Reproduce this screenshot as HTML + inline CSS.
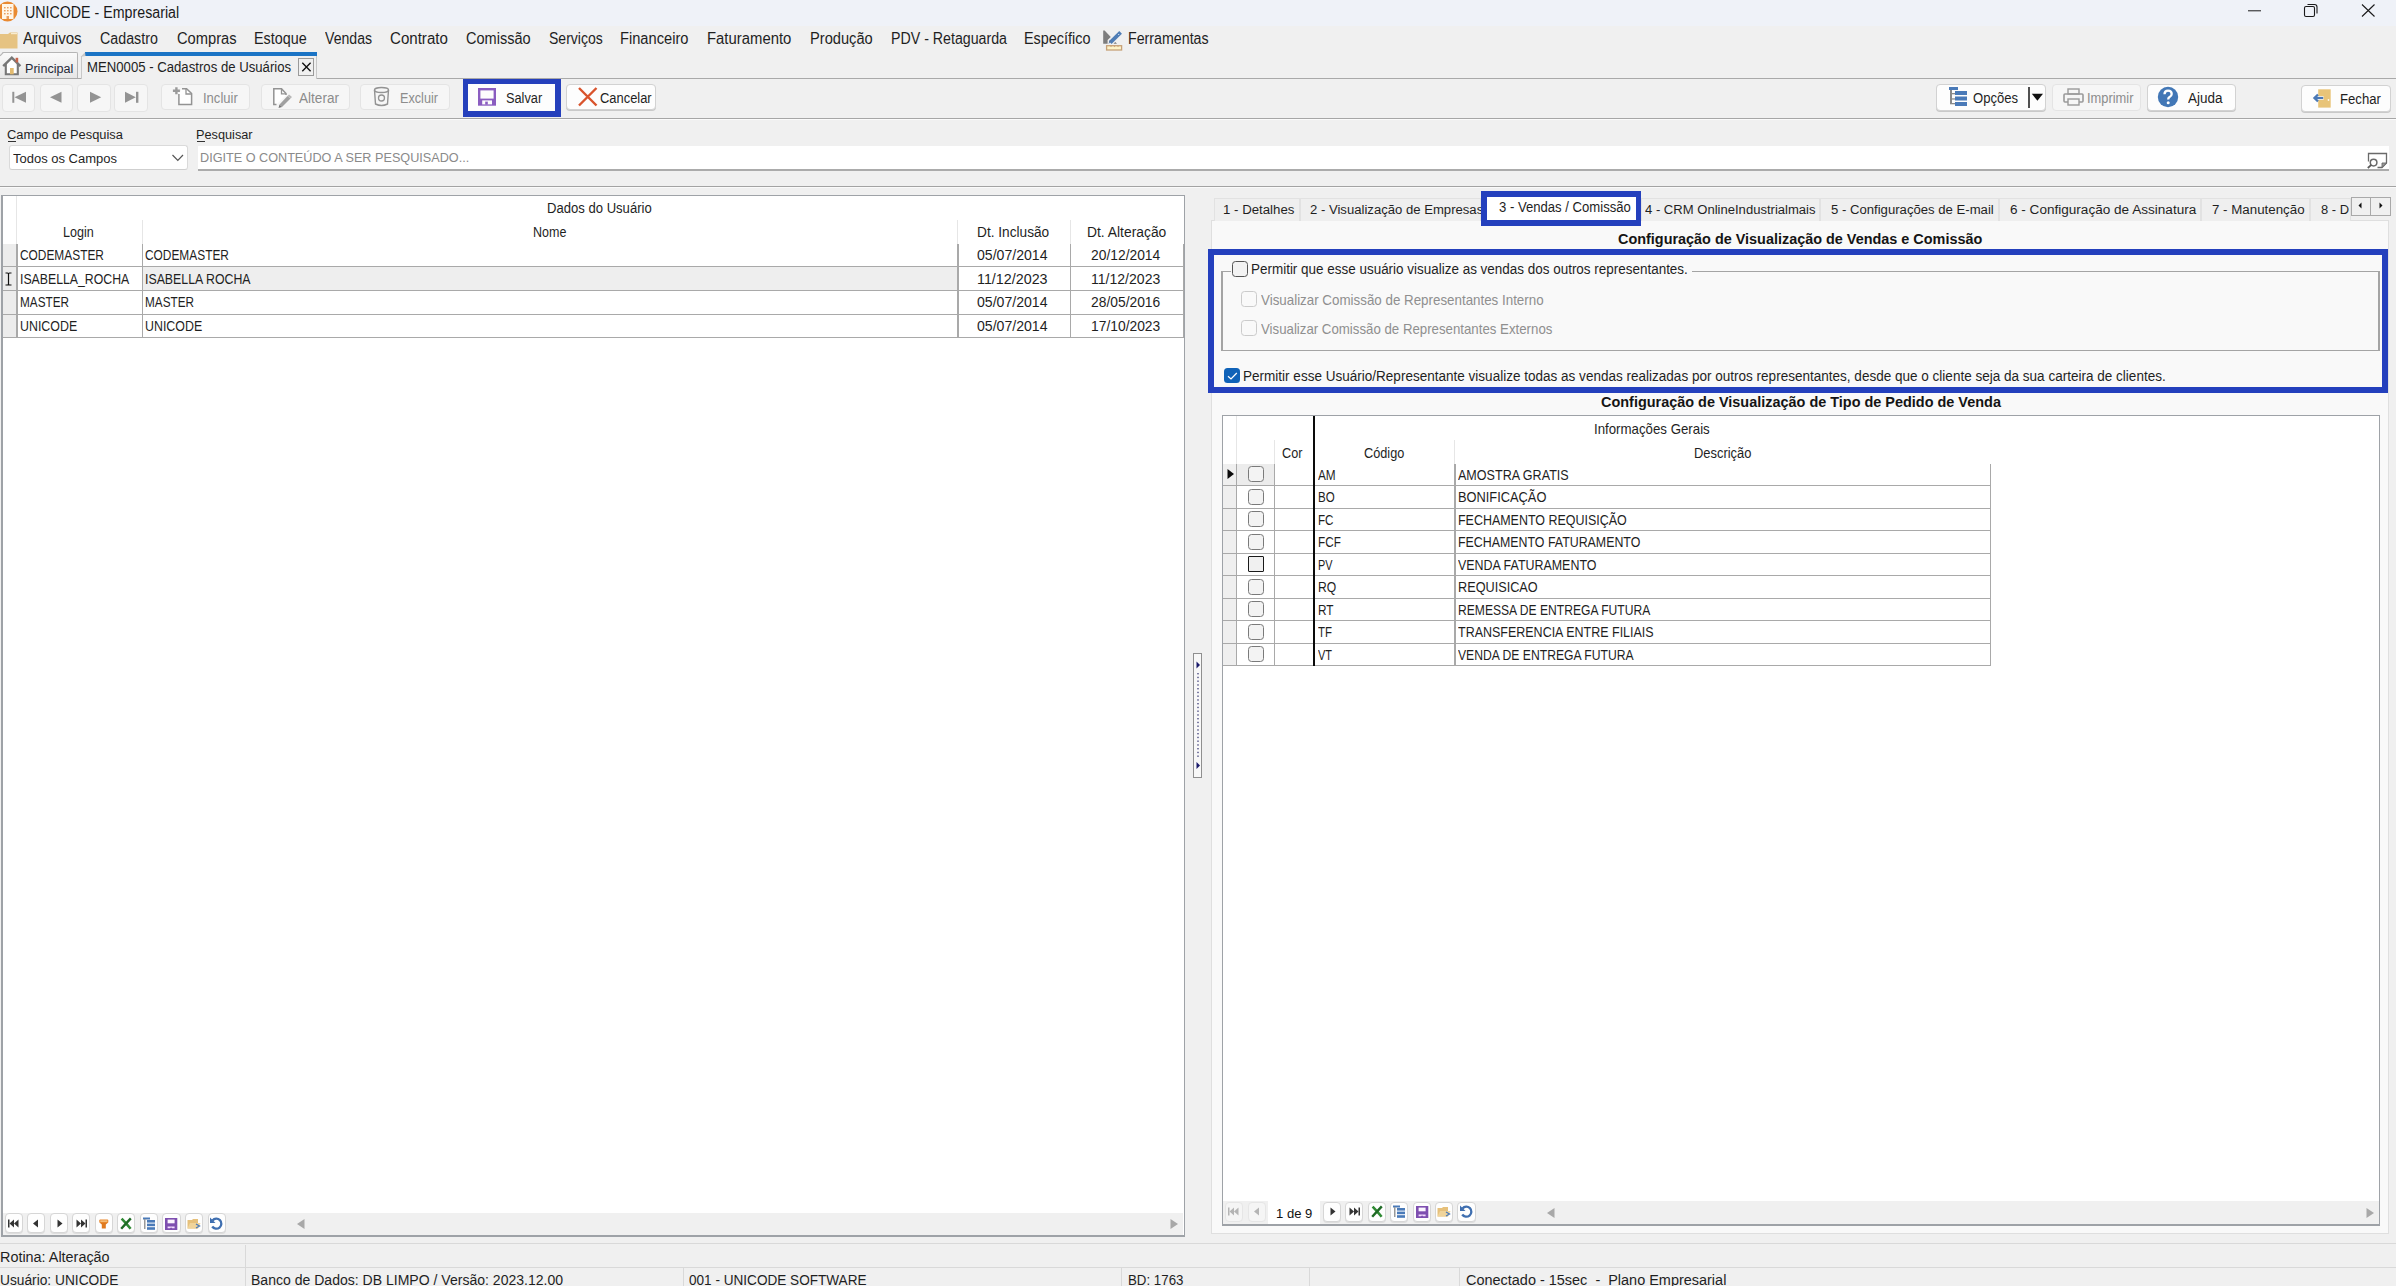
<!DOCTYPE html>
<html><head><meta charset="utf-8"><style>
html,body{margin:0;padding:0;}
body{width:2396px;height:1286px;overflow:hidden;position:relative;background:#f0f0f0;font-family:"Liberation Sans",sans-serif;}
.a{position:absolute;}
.t{position:absolute;white-space:nowrap;transform-origin:0 0;}
</style></head><body>
<div class="a" style="left:0.00px;top:0.00px;width:2396.00px;height:26.00px;background:#eff2f8;"></div>
<svg class="a" style="left:0.00px;top:0.00px;" width="20" height="24" viewBox="0 0 20 24"><circle cx="7.5" cy="11.5" r="10" fill="#e98a32"/><rect x="2" y="4" width="11.5" height="15" fill="#fff6e8"/><g fill="#e9a060"><rect x="4" y="7" width="1.6" height="1.4"/><rect x="7" y="7" width="1.6" height="1.4"/><rect x="10" y="7" width="1.6" height="1.4"/><rect x="4" y="10" width="1.6" height="1.4"/><rect x="7" y="10" width="1.6" height="1.4"/><rect x="10" y="10" width="1.6" height="1.4"/><rect x="4" y="13" width="1.6" height="1.4"/><rect x="7" y="13" width="1.6" height="1.4"/><rect x="10" y="13" width="1.6" height="1.4"/><rect x="6.5" y="16" width="2.5" height="3"/></g></svg>
<div class="t" style="left:25.00px;top:4px;font-size:16.42px;line-height:16.42px;color:#1a1a1a;transform:scaleX(0.8673);">UNICODE - Empresarial</div>
<svg class="a" style="left:2240.00px;top:0.00px;" width="156" height="24" viewBox="0 0 156 24"><line x1="8" y1="10.8" x2="21" y2="10.8" stroke="#1a1a1a" stroke-width="1"/><rect x="64.5" y="6.5" width="10" height="10" rx="1.5" fill="none" stroke="#1a1a1a" stroke-width="1.1"/><path d="M67.5 4.5 H74.5 Q77 4.5 77 7 V13.5" fill="none" stroke="#1a1a1a" stroke-width="1.1"/><path d="M122 4.5 L134.5 16.5 M134.5 4.5 L122 16.5" stroke="#1a1a1a" stroke-width="1.1"/></svg>
<svg class="a" style="left:0.00px;top:32.00px;" width="19" height="18" viewBox="0 0 19 18"><path d="M0 2 H8 L10 0.5 H17.5 V16.5 H0 Z" fill="#e6c382"/><rect x="11" y="1" width="6" height="1.2" fill="#f8ecd0"/></svg>
<div class="t" style="left:22.80px;top:31px;font-size:15.84px;line-height:15.84px;color:#1f1f1f;transform:scaleX(0.9525);">Arquivos</div>
<div class="t" style="left:100.40px;top:31px;font-size:15.84px;line-height:15.84px;color:#1f1f1f;transform:scaleX(0.9008);">Cadastro</div>
<div class="t" style="left:177.00px;top:31px;font-size:15.84px;line-height:15.84px;color:#1f1f1f;transform:scaleX(0.9291);">Compras</div>
<div class="t" style="left:254.30px;top:31px;font-size:15.84px;line-height:15.84px;color:#1f1f1f;transform:scaleX(0.9067);">Estoque</div>
<div class="t" style="left:324.70px;top:31px;font-size:15.84px;line-height:15.84px;color:#1f1f1f;transform:scaleX(0.8912);">Vendas</div>
<div class="t" style="left:390.00px;top:31px;font-size:15.84px;line-height:15.84px;color:#1f1f1f;transform:scaleX(0.9530);">Contrato</div>
<div class="t" style="left:465.70px;top:31px;font-size:15.84px;line-height:15.84px;color:#1f1f1f;transform:scaleX(0.9187);">Comissão</div>
<div class="t" style="left:548.50px;top:31px;font-size:15.84px;line-height:15.84px;color:#1f1f1f;transform:scaleX(0.8858);">Serviços</div>
<div class="t" style="left:620.20px;top:31px;font-size:15.84px;line-height:15.84px;color:#1f1f1f;transform:scaleX(0.9262);">Financeiro</div>
<div class="t" style="left:706.60px;top:31px;font-size:15.84px;line-height:15.84px;color:#1f1f1f;transform:scaleX(0.9398);">Faturamento</div>
<div class="t" style="left:809.60px;top:31px;font-size:15.84px;line-height:15.84px;color:#1f1f1f;transform:scaleX(0.9261);">Produção</div>
<div class="t" style="left:890.60px;top:31px;font-size:15.84px;line-height:15.84px;color:#1f1f1f;transform:scaleX(0.8970);">PDV - Retaguarda</div>
<div class="t" style="left:1024.30px;top:31px;font-size:15.84px;line-height:15.84px;color:#1f1f1f;transform:scaleX(0.9100);">Específico</div>
<div class="t" style="left:1127.80px;top:31px;font-size:15.84px;line-height:15.84px;color:#1f1f1f;transform:scaleX(0.8988);">Ferramentas</div>
<svg class="a" style="left:1103.00px;top:30.00px;" width="20" height="21" viewBox="0 0 20 21"><path d="M0.2 0.4 H1.6 L7.8 7 L4.6 10 V13.8 H0.2 Z" fill="#7d7d7d"/><path d="M10.5 13.8 H14 L12.3 11.9 Z" fill="#7d7d7d"/><path d="M7.2 12.6 L17.6 2.4" stroke="#4f7db5" stroke-width="3.8"/><path d="M15.2 5 L16.2 4" stroke="#dce8f4" stroke-width="1"/><path d="M5.6 14 L8 11.6 L6.5 10.2 Z" fill="#5a7aa6"/><rect x="3.6" y="15.7" width="15" height="4.3" fill="#fdf3c8" stroke="#c7a178" stroke-width="1.3"/><path d="M7 15.7 L8 17.2 L9 15.7 M10.5 15.7 L11.5 17.2 L12.5 15.7 M14 15.7 L15 17.2 L16 15.7" fill="#c7a178"/></svg>
<div class="a" style="left:0.00px;top:78.00px;width:2396.00px;height:1.00px;background:#a9a9a9;"></div>
<div class="a" style="left:0px;top:52px;width:78px;height:26px;box-sizing:border-box;border:1px solid #b5b5b5;border-left:none;border-bottom:none;border-radius:0 2px 0 0;background:linear-gradient(#fafafa,#e6e6e6);clip-path:polygon(3px 0,100% 0,100% 100%,0 100%,0 3px);"></div>
<svg class="a" style="left:0.00px;top:51.50px;" width="5" height="5" viewBox="0 0 5 5"><path d="M0 3.8 L3.2 0.6" stroke="#b5b5b5" stroke-width="1.2"/></svg>
<svg class="a" style="left:0.00px;top:52.00px;" width="22" height="24" viewBox="0 0 22 24"><path d="M5.8 11.5 L11.8 6 L17.8 11.5 V22.3 H5.8 Z" fill="#fff"/><path d="M5.8 12 V22.3 H17.8 V12" fill="none" stroke="#777" stroke-width="2.1"/><path d="M3.2 14.2 L11.8 5.6 L20.4 14.2" fill="none" stroke="#777" stroke-width="2.4"/><rect x="15.6" y="5.8" width="2.6" height="4.6" fill="#c8644a"/><rect x="10" y="16" width="3.7" height="6.3" fill="#e3bb70"/></svg>
<div class="t" style="left:25.40px;top:62px;font-size:13.52px;line-height:13.52px;color:#262a3a;transform:scaleX(0.9315);">Principal</div>
<div class="a" style="left:81px;top:56px;width:236px;height:23px;box-sizing:border-box;border-left:1px solid #c8c8c8;border-right:1px solid #c8c8c8;background:#f0f0f0;"></div>
<div class="a" style="left:85.00px;top:52.30px;width:232.00px;height:3.70px;background:#1b74c5;"></div>
<svg class="a" style="left:80.00px;top:52.00px;" width="6" height="5" viewBox="0 0 6 5"><path d="M0.5 5 L5 0.3 L5.5 4 Z" fill="#c8c8c8"/></svg>
<div class="t" style="left:86.70px;top:61px;font-size:13.95px;line-height:13.95px;color:#1f1f1f;transform:scaleX(0.9444);">MEN0005 - Cadastros de Usuários</div>
<div class="a" style="left:297.50px;top:58.30px;width:16.70px;height:18.20px;background:#f0f0f0;border:1px solid #9a9a9a;box-sizing:border-box;"></div>
<svg class="a" style="left:297.50px;top:58.30px;" width="17" height="18" viewBox="0 0 17 18"><path d="M4.3 4.8 L12.6 13.2 M12.6 4.8 L4.3 13.2" stroke="#111" stroke-width="1.35"/></svg>
<div class="a" style="left:0.00px;top:118.00px;width:2396.00px;height:1.00px;background:#a6a6a6;"></div>
<div class="a" style="left:0.00px;top:119.00px;width:2396.00px;height:1.00px;background:#fbfbfb;"></div>
<div class="a" style="left:2.0px;top:84.0px;width:33.1px;height:27.5px;box-sizing:border-box;border:1px solid #e4e4e4;border-radius:4px;background:#f6f6f6;"></div>
<div class="a" style="left:39.5px;top:84.0px;width:33.5px;height:27.5px;box-sizing:border-box;border:1px solid #e4e4e4;border-radius:4px;background:#f6f6f6;"></div>
<div class="a" style="left:77.1px;top:84.0px;width:33.8px;height:27.5px;box-sizing:border-box;border:1px solid #e4e4e4;border-radius:4px;background:#f6f6f6;"></div>
<div class="a" style="left:114.3px;top:84.0px;width:34.2px;height:27.5px;box-sizing:border-box;border:1px solid #e4e4e4;border-radius:4px;background:#f6f6f6;"></div>
<svg class="a" style="left:2.00px;top:83.00px;" width="34" height="28" viewBox="0 0 34 28"><rect x="10.3" y="8.8" width="2" height="11" fill="#939393"/><path d="M12.5 14.3 L24 8.8 L24 19.8 Z" fill="#939393"/></svg>
<svg class="a" style="left:39.50px;top:83.00px;" width="34" height="28" viewBox="0 0 34 28"><path d="M10 14.3 L21.5 8.8 L21.5 19.8 Z" fill="#939393"/></svg>
<svg class="a" style="left:77.10px;top:83.00px;" width="34" height="28" viewBox="0 0 34 28"><path d="M24.2 14.3 L13 8.8 L13 19.8 Z" fill="#939393"/></svg>
<svg class="a" style="left:114.30px;top:83.00px;" width="34" height="28" viewBox="0 0 34 28"><path d="M21.8 14.3 L11 8.8 L11 19.8 Z" fill="#939393"/><rect x="22" y="8.8" width="2.4" height="11" fill="#939393"/></svg>
<div class="a" style="left:161.4px;top:84.0px;width:88.9px;height:26.0px;box-sizing:border-box;border:1px solid #e4e4e4;border-radius:4px;background:#f6f6f6;"></div>
<svg class="a" style="left:170.00px;top:84.00px;" width="24" height="24" viewBox="0 0 24 24"><path d="M8.9 10 V20.6 H21.6 V9.5 L16.6 4.8 H12" fill="#fff" stroke="#939393" stroke-width="1.5"/><path d="M16 4.8 V10 H21.6" fill="none" stroke="#939393" stroke-width="1.3"/><path d="M6.4 3.3 V10.3 M2.9 6.8 H9.9" stroke="#9a9a9a" stroke-width="2.4"/></svg>
<div class="t" style="left:203.00px;top:91px;font-size:14.39px;line-height:14.39px;color:#8c8c8c;transform:scaleX(0.9066);">Incluir</div>
<div class="a" style="left:260.5px;top:84.0px;width:89.1px;height:26.0px;box-sizing:border-box;border:1px solid #e4e4e4;border-radius:4px;background:#f6f6f6;"></div>
<svg class="a" style="left:271.00px;top:84.00px;" width="24" height="24" viewBox="0 0 24 24"><path d="M5.5 20.5 H2.8 V4.8 H10.5 L15 9.5 V11" fill="#fff" stroke="#939393" stroke-width="1.5"/><path d="M10.5 4.8 V9.8 H15" fill="none" stroke="#939393" stroke-width="1.3"/><path d="M8.5 20.5 L16.5 12 L19.5 14.5 L11 23 Z" fill="#a0a0a0"/><path d="M16.5 12 L18 10.5 L21 13 L19.5 14.5 Z" fill="#b8b8b8"/><path d="M8.5 20.5 L11 23 L7.5 24 Z" fill="#777"/></svg>
<div class="t" style="left:299.40px;top:91px;font-size:14.39px;line-height:14.39px;color:#8c8c8c;transform:scaleX(0.9438);">Alterar</div>
<div class="a" style="left:360.4px;top:84.0px;width:89.4px;height:26.0px;box-sizing:border-box;border:1px solid #e4e4e4;border-radius:4px;background:#f6f6f6;"></div>
<svg class="a" style="left:372.00px;top:85.00px;" width="20" height="24" viewBox="0 0 20 24"><ellipse cx="9.5" cy="5" rx="7" ry="2.5" fill="none" stroke="#939393" stroke-width="1.4"/><path d="M2.5 5 L3.5 19 Q9.5 22 15.5 19 L16.5 5" fill="none" stroke="#939393" stroke-width="1.4"/><circle cx="9.5" cy="13" r="3" fill="none" stroke="#939393" stroke-width="1.3"/></svg>
<div class="t" style="left:400.40px;top:91px;font-size:14.39px;line-height:14.39px;color:#8c8c8c;transform:scaleX(0.8801);">Excluir</div>
<div class="a" style="left:462.60px;top:78.60px;width:98.50px;height:38.20px;background:#2540bc;"></div>
<div class="a" style="left:468.20px;top:83.90px;width:87.10px;height:27.10px;background:#fdfdfd;"></div>
<svg class="a" style="left:477.00px;top:87.00px;" width="21" height="19" viewBox="0 0 21 19"><rect x="2.2" y="2.2" width="15.6" height="15.3" fill="#fdfdfd" stroke="#8a5cc0" stroke-width="2.4"/><rect x="1" y="11.6" width="18" height="5.5" fill="#8a5cc0"/><rect x="5.2" y="13.4" width="9.8" height="4" fill="#fdfdfd"/><rect x="8.2" y="14.6" width="2.6" height="3" fill="#8a5cc0"/></svg>
<div class="t" style="left:505.60px;top:91px;font-size:14.39px;line-height:14.39px;color:#1f1f1f;transform:scaleX(0.8875);">Salvar</div>
<div class="a" style="left:566.4px;top:83.9px;width:89.9px;height:26.3px;box-sizing:border-box;border:1px solid #d2d2d2;border-radius:4px;background:#fdfdfd;box-shadow:0 1px 0 #c9c9c9;"></div>
<svg class="a" style="left:577.00px;top:86.00px;" width="21" height="21" viewBox="0 0 21 21"><path d="M2 2 L19.5 19.5 M19.5 2 L2 19.5" stroke="#d9532c" stroke-width="2.4"/></svg>
<div class="t" style="left:599.70px;top:91px;font-size:14.39px;line-height:14.39px;color:#1f1f1f;transform:scaleX(0.8977);">Cancelar</div>
<div class="a" style="left:1935.9px;top:84.0px;width:109.8px;height:27.4px;box-sizing:border-box;border:1px solid #d2d2d2;border-radius:4px;background:#fdfdfd;box-shadow:0 1px 0 #c9c9c9;"></div>
<svg class="a" style="left:1947.00px;top:86.00px;" width="22" height="21" viewBox="0 0 22 21"><rect x="2" y="1" width="9" height="3" fill="#4a7ab8"/><rect x="3" y="4" width="2" height="14" fill="#8a8a8a"/><rect x="8" y="5" width="12" height="4" fill="#4a7ab8"/><rect x="8" y="10.5" width="12" height="4" fill="#4a7ab8"/><rect x="8" y="16" width="12" height="4" fill="#4a7ab8"/><rect x="3" y="7" width="5" height="1.3" fill="#8a8a8a"/><rect x="3" y="12.3" width="5" height="1.3" fill="#8a8a8a"/><rect x="3" y="17" width="5" height="1.3" fill="#8a8a8a"/></svg>
<div class="t" style="left:1973.20px;top:90px;font-size:15.12px;line-height:15.12px;color:#1f1f1f;transform:scaleX(0.8655);">Opções</div>
<div class="a" style="left:2028.40px;top:87.00px;width:1.30px;height:21.00px;background:#505050;"></div>
<svg class="a" style="left:2031.00px;top:92.00px;" width="13" height="10" viewBox="0 0 13 10"><path d="M0.8 1.8 H12 L6.4 8.8 Z" fill="#111"/></svg>
<div class="a" style="left:2051.5px;top:84.0px;width:89.0px;height:27.4px;box-sizing:border-box;border:1px solid #e4e4e4;border-radius:4px;background:#f6f6f6;"></div>
<svg class="a" style="left:2063.00px;top:88.00px;" width="21" height="18" viewBox="0 0 21 18"><rect x="5" y="1" width="11" height="5" fill="none" stroke="#9a9a9a" stroke-width="1.4"/><rect x="1" y="6" width="19" height="8" rx="1" fill="none" stroke="#9a9a9a" stroke-width="1.6"/><rect x="5" y="11" width="11" height="6" fill="#f6f6f6" stroke="#9a9a9a" stroke-width="1.4"/></svg>
<div class="t" style="left:2086.50px;top:91px;font-size:14.24px;line-height:14.24px;color:#8c8c8c;transform:scaleX(0.9045);">Imprimir</div>
<div class="a" style="left:2146.5px;top:84.0px;width:89.7px;height:27.4px;box-sizing:border-box;border:1px solid #d2d2d2;border-radius:4px;background:#fdfdfd;box-shadow:0 1px 0 #c9c9c9;"></div>
<svg class="a" style="left:2157.00px;top:86.00px;" width="22" height="22" viewBox="0 0 22 22"><circle cx="11" cy="11" r="10.2" fill="#4277b6"/><path d="M7.5 8.3 Q7.5 4.6 11 4.6 Q14.7 4.6 14.7 8 Q14.7 10 12.3 11.3 Q11.2 12 11.2 13.5" fill="none" stroke="#fff" stroke-width="2.3"/><circle cx="11.2" cy="16.8" r="1.5" fill="#fff"/></svg>
<div class="t" style="left:2187.80px;top:91px;font-size:14.83px;line-height:14.83px;color:#1f1f1f;transform:scaleX(0.9096);">Ajuda</div>
<div class="a" style="left:2301.4px;top:85.0px;width:89.8px;height:27.4px;box-sizing:border-box;border:1px solid #d2d2d2;border-radius:4px;background:#fdfdfd;box-shadow:0 1px 0 #c9c9c9;"></div>
<svg class="a" style="left:2312.00px;top:88.00px;" width="22" height="22" viewBox="0 0 22 22"><rect x="6.2" y="1.3" width="12.5" height="18.3" fill="#e8c478"/><circle cx="16.5" cy="12" r="0.9" fill="#fff8e8"/><path d="M3.5 10 H11.5" stroke="#fff" stroke-width="3.6"/><path d="M4 10 H11.2" stroke="#4a78b5" stroke-width="2.2"/><path d="M6 6.6 L2.4 10 L6 13.4" fill="none" stroke="#4a78b5" stroke-width="2.2"/></svg>
<div class="t" style="left:2340.00px;top:92px;font-size:14.83px;line-height:14.83px;color:#1f1f1f;transform:scaleX(0.8861);">Fechar</div>
<div class="t" style="left:7.30px;top:128px;font-size:13.66px;line-height:13.66px;color:#1f1f1f;transform:scaleX(0.9430);">Campo de Pesquisa</div>
<div class="a" style="left:7.50px;top:140.80px;width:8.50px;height:1.00px;background:#333;"></div>
<div class="t" style="left:196.30px;top:128px;font-size:13.66px;line-height:13.66px;color:#1f1f1f;transform:scaleX(0.9318);">Pesquisar</div>
<div class="a" style="left:196.50px;top:140.80px;width:8.00px;height:1.00px;background:#333;"></div>
<div class="a" style="left:8.5px;top:145px;width:179.5px;height:25px;box-sizing:border-box;border:1px solid #dadada;border-bottom-color:#cfcfcf;border-radius:3px;background:#fff;"></div>
<div class="t" style="left:12.90px;top:152px;font-size:13.23px;line-height:13.23px;color:#1f1f1f;transform:scaleX(0.9831);">Todos os Campos</div>
<svg class="a" style="left:171.00px;top:153.00px;" width="14" height="10" viewBox="0 0 14 10"><path d="M1.5 2 L6.8 7.5 L12 2" fill="none" stroke="#555" stroke-width="1.2"/></svg>
<div class="a" style="left:198.00px;top:145.50px;width:2190.60px;height:25.50px;background:#fff;"></div>
<div class="a" style="left:198.00px;top:169.00px;width:2190.60px;height:2.00px;background:#ababab;"></div>
<div class="t" style="left:199.70px;top:152px;font-size:12.79px;line-height:12.79px;color:#8a8a8a;transform:scaleX(0.9897);">DIGITE O CONTEÚDO A SER PESQUISADO...</div>
<svg class="a" style="left:2366.00px;top:152.00px;" width="22" height="17" viewBox="0 0 22 17"><path d="M2.5 9.5 V1.5 H20.5 V11 L16 15.5 H11.5" fill="none" stroke="#6a6a6a" stroke-width="1.3"/><path d="M20.5 11 H16 V15.5 Z" fill="#9a9a9a" stroke="#6a6a6a" stroke-width="0.9"/><circle cx="7.6" cy="10.6" r="3.3" fill="#fff" stroke="#6a6a6a" stroke-width="1.5"/><path d="M5.3 12.9 L1.8 16" stroke="#5a5a5a" stroke-width="1.8"/></svg>
<div class="a" style="left:0.00px;top:186.00px;width:2396.00px;height:1.00px;background:#a3a3a3;"></div>
<div class="a" style="left:0.00px;top:187.00px;width:2396.00px;height:1.00px;background:#fafafa;"></div>
<div class="a" style="left:1.20px;top:194.60px;width:1183.80px;height:1042.10px;background:#ffffff;"></div>
<div class="a" style="left:1.2px;top:194.6px;width:1183.8px;height:42.1px;"></div>
<div class="a" style="left:1.20px;top:194.60px;width:1183.80px;height:1.60px;background:#9ea2a7;"></div>
<div class="a" style="left:1.20px;top:194.60px;width:1.40px;height:1042.10px;background:#9ea2a7;"></div>
<div class="a" style="left:1183.50px;top:194.60px;width:1.50px;height:1042.10px;background:#9ea2a7;"></div>
<div class="a" style="left:1.20px;top:1235.30px;width:1183.80px;height:1.40px;background:#9ea2a7;"></div>
<div class="a" style="left:16.20px;top:196.00px;width:1.00px;height:47.50px;background:#e6e6e6;"></div>
<div class="a" style="left:141.80px;top:219.50px;width:1.00px;height:24.00px;background:#e6e6e6;"></div>
<div class="a" style="left:957.00px;top:219.50px;width:1.00px;height:24.00px;background:#e6e6e6;"></div>
<div class="a" style="left:1069.80px;top:219.50px;width:1.00px;height:24.00px;background:#e6e6e6;"></div>
<div class="t" style="left:546.70px;top:201px;font-size:14.53px;line-height:14.53px;color:#1f1f1f;transform:scaleX(0.9011);">Dados do Usuário</div>
<div class="t" style="left:63.40px;top:225px;font-size:14.24px;line-height:14.24px;color:#1f1f1f;transform:scaleX(0.8840);">Login</div>
<div class="t" style="left:533.00px;top:225px;font-size:14.24px;line-height:14.24px;color:#1f1f1f;transform:scaleX(0.8793);">Nome</div>
<div class="t" style="left:977.40px;top:225px;font-size:14.53px;line-height:14.53px;color:#1f1f1f;transform:scaleX(0.9424);">Dt. Inclusão</div>
<div class="t" style="left:1086.70px;top:225px;font-size:14.53px;line-height:14.53px;color:#1f1f1f;transform:scaleX(0.9545);">Dt. Alteração</div>
<div class="a" style="left:2.60px;top:243.50px;width:13.60px;height:94.20px;background:#ececec;"></div>
<div class="a" style="left:143.00px;top:267.20px;width:814.00px;height:23.00px;background:#eeeeee;"></div>
<div class="a" style="left:2.60px;top:266.20px;width:1180.90px;height:1.30px;background:#a9a9a9;"></div>
<div class="a" style="left:2.60px;top:289.90px;width:1180.90px;height:1.30px;background:#a9a9a9;"></div>
<div class="a" style="left:2.60px;top:313.70px;width:1180.90px;height:1.30px;background:#a9a9a9;"></div>
<div class="a" style="left:2.60px;top:337.20px;width:1180.90px;height:1.30px;background:#a9a9a9;"></div>
<div class="a" style="left:16.20px;top:243.50px;width:1.50px;height:94.20px;background:#a9a9a9;"></div>
<div class="a" style="left:141.80px;top:243.50px;width:1.50px;height:94.20px;background:#a9a9a9;"></div>
<div class="a" style="left:957.00px;top:243.50px;width:1.50px;height:94.20px;background:#a9a9a9;"></div>
<div class="a" style="left:1069.80px;top:243.50px;width:1.50px;height:94.20px;background:#a9a9a9;"></div>
<div class="a" style="left:1182.50px;top:243.50px;width:1.50px;height:94.20px;background:#a9a9a9;"></div>
<div class="t" style="left:19.80px;top:247px;font-size:15.26px;line-height:15.26px;color:#1f1f1f;transform:scaleX(0.7801);">CODEMASTER</div>
<div class="t" style="left:144.80px;top:247px;font-size:15.26px;line-height:15.26px;color:#1f1f1f;transform:scaleX(0.7801);">CODEMASTER</div>
<div class="t" style="left:977.40px;top:247px;font-size:15.26px;line-height:15.26px;color:#1f1f1f;transform:scaleX(0.9244);">05/07/2014</div>
<div class="t" style="left:1091.40px;top:247px;font-size:15.26px;line-height:15.26px;color:#1f1f1f;transform:scaleX(0.9074);">20/12/2014</div>
<div class="t" style="left:19.80px;top:271px;font-size:15.26px;line-height:15.26px;color:#1f1f1f;transform:scaleX(0.8054);">ISABELLA_ROCHA</div>
<div class="t" style="left:144.80px;top:271px;font-size:15.26px;line-height:15.26px;color:#1f1f1f;transform:scaleX(0.8085);">ISABELLA ROCHA</div>
<div class="t" style="left:977.40px;top:271px;font-size:15.26px;line-height:15.26px;color:#1f1f1f;transform:scaleX(0.9383);">11/12/2023</div>
<div class="t" style="left:1091.40px;top:271px;font-size:15.26px;line-height:15.26px;color:#1f1f1f;transform:scaleX(0.9210);">11/12/2023</div>
<div class="t" style="left:19.80px;top:294px;font-size:15.26px;line-height:15.26px;color:#1f1f1f;transform:scaleX(0.7706);">MASTER</div>
<div class="t" style="left:144.80px;top:294px;font-size:15.26px;line-height:15.26px;color:#1f1f1f;transform:scaleX(0.7706);">MASTER</div>
<div class="t" style="left:977.40px;top:294px;font-size:15.26px;line-height:15.26px;color:#1f1f1f;transform:scaleX(0.9244);">05/07/2014</div>
<div class="t" style="left:1091.40px;top:294px;font-size:15.26px;line-height:15.26px;color:#1f1f1f;transform:scaleX(0.9074);">28/05/2016</div>
<div class="t" style="left:19.80px;top:318px;font-size:15.26px;line-height:15.26px;color:#1f1f1f;transform:scaleX(0.8129);">UNICODE</div>
<div class="t" style="left:144.80px;top:318px;font-size:15.26px;line-height:15.26px;color:#1f1f1f;transform:scaleX(0.8129);">UNICODE</div>
<div class="t" style="left:977.40px;top:318px;font-size:15.26px;line-height:15.26px;color:#1f1f1f;transform:scaleX(0.9244);">05/07/2014</div>
<div class="t" style="left:1091.40px;top:318px;font-size:15.26px;line-height:15.26px;color:#1f1f1f;transform:scaleX(0.9074);">17/10/2023</div>
<svg class="a" style="left:4.00px;top:272.00px;" width="9" height="14" viewBox="0 0 9 14"><path d="M1.5 1 H3.5 Q4.5 1 4.5 2 V12 Q4.5 13 3.5 13 H1.5 M7.5 1 H5.5 Q4.5 1 4.5 2 V12 Q4.5 13 5.5 13 H7.5" fill="none" stroke="#111" stroke-width="1.2"/></svg>
<div class="a" style="left:2.60px;top:1212.50px;width:1180.90px;height:22.80px;background:#f0f0f0;"></div>
<div class="a" style="left:4.5px;top:1213.3px;width:18.3px;height:20px;box-sizing:border-box;border:1px solid #d6d6d6;border-radius:4px;background:#fefefe;box-shadow:0 1px 0 #dedede;"></div>
<svg class="a" style="left:4.50px;top:1213.80px;" width="18" height="19" viewBox="0 0 18 19"><rect x="3" y="5.5" width="1.5" height="8" fill="#333"/><path d="M4.5 9.5 L9 5.5 V13.5 Z M9 9.5 L13.5 5.5 V13.5 Z" fill="#333"/></svg>
<div class="a" style="left:27.1px;top:1213.3px;width:18.3px;height:20px;box-sizing:border-box;border:1px solid #d6d6d6;border-radius:4px;background:#fefefe;box-shadow:0 1px 0 #dedede;"></div>
<svg class="a" style="left:27.05px;top:1213.80px;" width="18" height="19" viewBox="0 0 18 19"><path d="M6 9.5 L11 5.5 V13.5 Z" fill="#333"/></svg>
<div class="a" style="left:49.6px;top:1213.3px;width:18.3px;height:20px;box-sizing:border-box;border:1px solid #d6d6d6;border-radius:4px;background:#fefefe;box-shadow:0 1px 0 #dedede;"></div>
<svg class="a" style="left:49.60px;top:1213.80px;" width="18" height="19" viewBox="0 0 18 19"><path d="M12.5 9.5 L7.5 5.5 V13.5 Z" fill="#333"/></svg>
<div class="a" style="left:72.2px;top:1213.3px;width:18.3px;height:20px;box-sizing:border-box;border:1px solid #d6d6d6;border-radius:4px;background:#fefefe;box-shadow:0 1px 0 #dedede;"></div>
<svg class="a" style="left:72.15px;top:1213.80px;" width="18" height="19" viewBox="0 0 18 19"><path d="M9 9.5 L4.5 5.5 V13.5 Z M13.5 9.5 L9 5.5 V13.5 Z" fill="#333"/><rect x="13.5" y="5.5" width="1.5" height="8" fill="#333"/></svg>
<div class="a" style="left:94.7px;top:1213.3px;width:18.3px;height:20px;box-sizing:border-box;border:1px solid #d6d6d6;border-radius:4px;background:#fefefe;box-shadow:0 1px 0 #dedede;"></div>
<svg class="a" style="left:94.70px;top:1213.80px;" width="18" height="19" viewBox="0 0 18 19"><rect x="4.3" y="5.6" width="9" height="3.4" rx="1" fill="#e8862a"/><path d="M5 9 H12.6 L10.8 10.6 V14.6 H6.8 V10.6 Z" fill="#e07a1e"/><rect x="5.3" y="6.6" width="7" height="1" fill="#fde0a8"/></svg>
<div class="a" style="left:117.2px;top:1213.3px;width:18.3px;height:20px;box-sizing:border-box;border:1px solid #d6d6d6;border-radius:4px;background:#fefefe;box-shadow:0 1px 0 #dedede;"></div>
<svg class="a" style="left:117.25px;top:1213.80px;" width="18" height="19" viewBox="0 0 18 19"><path d="M4.6 4.6 Q9 9 13.6 14.8" fill="none" stroke="#2f8a34" stroke-width="2.6"/><path d="M13.8 4.4 Q9 9.5 4.2 14.8" fill="none" stroke="#1e6a24" stroke-width="2.4"/></svg>
<div class="a" style="left:139.8px;top:1213.3px;width:18.3px;height:20px;box-sizing:border-box;border:1px solid #d6d6d6;border-radius:4px;background:#fefefe;box-shadow:0 1px 0 #dedede;"></div>
<svg class="a" style="left:139.80px;top:1213.80px;" width="18" height="19" viewBox="0 0 18 19"><rect x="3" y="3.5" width="7" height="2" fill="#4a7ab8"/><rect x="4" y="5" width="1.5" height="10" fill="#999"/><rect x="7" y="6" width="8" height="2.6" fill="#4a7ab8"/><rect x="7" y="9.6" width="8" height="2.6" fill="#4a7ab8"/><rect x="7" y="13.2" width="8" height="2.6" fill="#4a7ab8"/></svg>
<div class="a" style="left:162.3px;top:1213.3px;width:18.3px;height:20px;box-sizing:border-box;border:1px solid #d6d6d6;border-radius:4px;background:#fefefe;box-shadow:0 1px 0 #dedede;"></div>
<svg class="a" style="left:162.35px;top:1213.80px;" width="18" height="19" viewBox="0 0 18 19"><rect x="3" y="4" width="12.3" height="12" fill="#7e4fb0"/><rect x="5.6" y="5.6" width="7" height="3.7" fill="#fbf4ff"/><path d="M5.6 14.2 V12.4 H12.6 V14.2 H10.2 Q9.1 12.8 8 14.2 Z" fill="#f3dcff"/></svg>
<div class="a" style="left:184.9px;top:1213.3px;width:18.3px;height:20px;box-sizing:border-box;border:1px solid #d6d6d6;border-radius:4px;background:#fefefe;box-shadow:0 1px 0 #dedede;"></div>
<svg class="a" style="left:184.90px;top:1213.80px;" width="18" height="19" viewBox="0 0 18 19"><path d="M2.5 6 H7 L8 5 H13 V14.5 H2.5 Z" fill="#e6c07a"/><path d="M2.5 14.5 L5 9 H15.5 L13 14.5 Z" fill="#f0d49a"/><path d="M11 10 L14.5 12 L11 14" fill="none" stroke="#4a7ab8" stroke-width="1.3"/></svg>
<div class="a" style="left:207.5px;top:1213.3px;width:18.3px;height:20px;box-sizing:border-box;border:1px solid #d6d6d6;border-radius:4px;background:#fefefe;box-shadow:0 1px 0 #dedede;"></div>
<svg class="a" style="left:207.45px;top:1213.80px;" width="18" height="19" viewBox="0 0 18 19"><path d="M5.5 6.5 A5 5 0 1 1 5.2 12.5" fill="none" stroke="#3f6fb0" stroke-width="2.3"/><path d="M3 3.5 L3 9 L8.5 9 Z" fill="#3f6fb0"/></svg>
<svg class="a" style="left:295.00px;top:1217.00px;" width="12" height="14" viewBox="0 0 12 14"><path d="M2 7 L9.5 2 V12 Z" fill="#a8a8a8"/></svg>
<svg class="a" style="left:1168.00px;top:1217.00px;" width="12" height="14" viewBox="0 0 12 14"><path d="M10 7 L2.5 2 V12 Z" fill="#a8a8a8"/></svg>
<div class="a" style="left:1192.50px;top:653.40px;width:9.50px;height:124.20px;background:#f8f8f8;border:1px solid #8f8f8f;box-sizing:border-box;"></div>
<svg class="a" style="left:1192.50px;top:653.40px;" width="10" height="125" viewBox="0 0 10 125"><path d="M3.5 8.5 L7 12 L3.5 15.5 Z" fill="#1a1a6a"/><path d="M3.5 109 L7 112.5 L3.5 116 Z" fill="#1a1a6a"/><rect x="4.3" y="20.00" width="1.4" height="1.4" fill="#4a4a80"/><rect x="4.3" y="23.75" width="1.4" height="1.4" fill="#4a4a80"/><rect x="4.3" y="27.50" width="1.4" height="1.4" fill="#4a4a80"/><rect x="4.3" y="31.25" width="1.4" height="1.4" fill="#4a4a80"/><rect x="4.3" y="35.00" width="1.4" height="1.4" fill="#4a4a80"/><rect x="4.3" y="38.75" width="1.4" height="1.4" fill="#4a4a80"/><rect x="4.3" y="42.50" width="1.4" height="1.4" fill="#4a4a80"/><rect x="4.3" y="46.25" width="1.4" height="1.4" fill="#4a4a80"/><rect x="4.3" y="50.00" width="1.4" height="1.4" fill="#4a4a80"/><rect x="4.3" y="53.75" width="1.4" height="1.4" fill="#4a4a80"/><rect x="4.3" y="57.50" width="1.4" height="1.4" fill="#4a4a80"/><rect x="4.3" y="61.25" width="1.4" height="1.4" fill="#4a4a80"/><rect x="4.3" y="65.00" width="1.4" height="1.4" fill="#4a4a80"/><rect x="4.3" y="68.75" width="1.4" height="1.4" fill="#4a4a80"/><rect x="4.3" y="72.50" width="1.4" height="1.4" fill="#4a4a80"/><rect x="4.3" y="76.25" width="1.4" height="1.4" fill="#4a4a80"/><rect x="4.3" y="80.00" width="1.4" height="1.4" fill="#4a4a80"/><rect x="4.3" y="83.75" width="1.4" height="1.4" fill="#4a4a80"/><rect x="4.3" y="87.50" width="1.4" height="1.4" fill="#4a4a80"/><rect x="4.3" y="91.25" width="1.4" height="1.4" fill="#4a4a80"/><rect x="4.3" y="95.00" width="1.4" height="1.4" fill="#4a4a80"/><rect x="4.3" y="98.75" width="1.4" height="1.4" fill="#4a4a80"/><rect x="4.3" y="102.50" width="1.4" height="1.4" fill="#4a4a80"/></svg>
<div class="a" style="left:1210.5px;top:220px;width:1178px;height:1014.3px;box-sizing:border-box;border:1px solid #dfdfdf;background:#f9f9f9;"></div>
<div class="a" style="left:1213.5px;top:197.5px;width:86.0px;height:23px;box-sizing:border-box;border:1px solid #e2e2e2;border-bottom:none;background:#efefef;overflow:hidden;"></div>
<div class="a" style="left:1299.5px;top:197.5px;width:181.5px;height:23px;box-sizing:border-box;border:1px solid #e2e2e2;border-bottom:none;background:#efefef;overflow:hidden;"></div>
<div class="a" style="left:1641.0px;top:197.5px;width:179.3px;height:23px;box-sizing:border-box;border:1px solid #e2e2e2;border-bottom:none;background:#efefef;overflow:hidden;"></div>
<div class="a" style="left:1820.3px;top:197.5px;width:178.7px;height:23px;box-sizing:border-box;border:1px solid #e2e2e2;border-bottom:none;background:#efefef;overflow:hidden;"></div>
<div class="a" style="left:1999.0px;top:197.5px;width:201.8px;height:23px;box-sizing:border-box;border:1px solid #e2e2e2;border-bottom:none;background:#efefef;overflow:hidden;"></div>
<div class="a" style="left:2200.8px;top:197.5px;width:109.2px;height:23px;box-sizing:border-box;border:1px solid #e2e2e2;border-bottom:none;background:#efefef;overflow:hidden;"></div>
<div class="a" style="left:2310.0px;top:197.5px;width:41.2px;height:23px;box-sizing:border-box;border:1px solid #e2e2e2;border-bottom:none;background:#efefef;overflow:hidden;"></div>
<div class="t" style="left:1222.80px;top:203px;font-size:13.66px;line-height:13.66px;color:#1f1f1f;transform:scaleX(0.9695);">1 - Detalhes</div>
<div class="a" style="left:1299.5px;top:190px;width:181.0px;height:35px;overflow:hidden;">
<div class="t" style="left:10.30px;top:13px;font-size:13.66px;line-height:13.66px;color:#1f1f1f;transform:scaleX(0.96);">2 - Visualização de Empresas</div>
</div>
<div class="t" style="left:1644.70px;top:203px;font-size:13.66px;line-height:13.66px;color:#1f1f1f;transform:scaleX(0.9563);">4 - CRM OnlineIndustrialmais</div>
<div class="t" style="left:1831.20px;top:203px;font-size:13.66px;line-height:13.66px;color:#1f1f1f;transform:scaleX(0.9615);">5 - Configurações de E-mail</div>
<div class="t" style="left:2009.60px;top:203px;font-size:13.66px;line-height:13.66px;color:#1f1f1f;transform:scaleX(0.9933);">6 - Configuração de Assinatura</div>
<div class="t" style="left:2212.40px;top:203px;font-size:13.66px;line-height:13.66px;color:#1f1f1f;transform:scaleX(0.9756);">7 - Manutenção</div>
<div class="t" style="left:2320.70px;top:203px;font-size:13.66px;line-height:13.66px;color:#1f1f1f;transform:scaleX(0.9493);">8 - D</div>
<div class="a" style="left:1481.10px;top:191.00px;width:160.00px;height:34.70px;background:#2440bd;"></div>
<div class="a" style="left:1487.20px;top:197.10px;width:148.80px;height:22.60px;background:#ffffff;"></div>
<div class="t" style="left:1499.00px;top:200px;font-size:14.53px;line-height:14.53px;color:#1f1f1f;transform:scaleX(0.9030);">3 - Vendas / Comissão</div>
<div class="a" style="left:2351.20px;top:197.40px;width:19.50px;height:19.00px;background:#f0f0f0;border:1px solid #a9a9a9;box-sizing:border-box;"></div>
<div class="a" style="left:2370.20px;top:197.40px;width:20.70px;height:19.00px;background:#f0f0f0;border:1px solid #a9a9a9;box-sizing:border-box;"></div>
<svg class="a" style="left:2351.20px;top:197.40px;" width="20" height="19" viewBox="0 0 20 19"><path d="M7.5 8.5 L10.5 5.5 V11.5 Z" fill="#111"/></svg>
<svg class="a" style="left:2370.20px;top:197.40px;" width="20" height="19" viewBox="0 0 20 19"><path d="M12.5 8.5 L9.5 5.5 V11.5 Z" fill="#111"/></svg>
<div class="t" style="left:1618.20px;top:233px;font-size:13.81px;line-height:13.81px;color:#141414;font-weight:bold;transform:scaleX(1.0448);">Configuração de Visualização de Vendas e Comissão</div>
<div class="a" style="left:1208.00px;top:249.20px;width:1180.30px;height:144.10px;background:#2440bd;"></div>
<div class="a" style="left:1214.00px;top:255.40px;width:1168.20px;height:131.80px;background:#f9f9f9;"></div>
<div class="a" style="left:1221.30px;top:271.00px;width:1.50px;height:80.00px;background:#a4a4a4;"></div>
<div class="a" style="left:2378.30px;top:271.00px;width:1.50px;height:80.00px;background:#a4a4a4;"></div>
<div class="a" style="left:1221.30px;top:349.50px;width:1158.50px;height:1.50px;background:#a4a4a4;"></div>
<div class="a" style="left:1221.30px;top:271.00px;width:9.70px;height:1.30px;background:#a4a4a4;"></div>
<div class="a" style="left:1692.00px;top:271.00px;width:687.80px;height:1.30px;background:#a4a4a4;"></div>
<div class="a" style="left:1231.5px;top:261.3px;width:16px;height:15.5px;box-sizing:border-box;border:1.5px solid #555555;border-radius:3.5px;background:#f3f3f3;"></div>
<div class="t" style="left:1250.80px;top:263px;font-size:13.95px;line-height:13.95px;color:#1f1f1f;transform:scaleX(0.9655);">Permitir que esse usuário visualize as vendas dos outros representantes.</div>
<div class="a" style="left:1241.2px;top:291.4px;width:16px;height:15.5px;box-sizing:border-box;border:1.4px solid #cbcbcb;border-radius:3.5px;background:#f9f9f9;"></div>
<div class="t" style="left:1261.00px;top:293px;font-size:14.97px;line-height:14.97px;color:#8f8f8f;transform:scaleX(0.8922);">Visualizar Comissão de Representantes Interno</div>
<div class="a" style="left:1241.2px;top:320.3px;width:16px;height:15.5px;box-sizing:border-box;border:1.4px solid #cbcbcb;border-radius:3.5px;background:#f9f9f9;"></div>
<div class="t" style="left:1261.00px;top:322px;font-size:14.97px;line-height:14.97px;color:#8f8f8f;transform:scaleX(0.8851);">Visualizar Comissão de Representantes Externos</div>
<div class="a" style="left:1223.7px;top:367.7px;width:16.3px;height:15.7px;border-radius:3.5px;background:#0f62b8;"></div>
<svg class="a" style="left:1223.70px;top:367.70px;" width="17" height="16" viewBox="0 0 17 16"><path d="M4 8.3 L7 11 L12.8 5" fill="none" stroke="#fff" stroke-width="1.2"/></svg>
<div class="t" style="left:1243.30px;top:369px;font-size:14.53px;line-height:14.53px;color:#1f1f1f;transform:scaleX(0.9320);">Permitir esse Usuário/Representante visualize todas as vendas realizadas por outros representantes, desde que o cliente seja da sua carteira de clientes.</div>
<div class="t" style="left:1600.70px;top:395px;font-size:14.53px;line-height:14.53px;color:#141414;font-weight:bold;transform:scaleX(0.9949);">Configuração de Visualização de Tipo de Pedido de Venda</div>
<div class="a" style="left:1221.50px;top:414.80px;width:1158.50px;height:810.90px;background:#ffffff;"></div>
<div class="a" style="left:1221.50px;top:414.80px;width:1158.50px;height:1.50px;background:#9ea2a7;"></div>
<div class="a" style="left:1221.50px;top:414.80px;width:1.40px;height:810.90px;background:#9ea2a7;"></div>
<div class="a" style="left:2378.60px;top:414.80px;width:1.40px;height:810.90px;background:#9ea2a7;"></div>
<div class="a" style="left:1221.50px;top:1224.30px;width:1158.50px;height:1.40px;background:#9ea2a7;"></div>
<div class="a" style="left:1235.70px;top:416.30px;width:1.00px;height:47.70px;background:#e6e6e6;"></div>
<div class="a" style="left:1273.60px;top:440.30px;width:1.00px;height:23.70px;background:#e6e6e6;"></div>
<div class="a" style="left:1454.30px;top:440.30px;width:1.00px;height:23.70px;background:#e6e6e6;"></div>
<div class="t" style="left:1593.90px;top:421px;font-size:15.12px;line-height:15.12px;color:#1f1f1f;transform:scaleX(0.8777);">Informações Gerais</div>
<div class="t" style="left:1282.30px;top:447px;font-size:13.95px;line-height:13.95px;color:#1f1f1f;transform:scaleX(0.9075);">Cor</div>
<div class="t" style="left:1363.70px;top:447px;font-size:13.95px;line-height:13.95px;color:#1f1f1f;transform:scaleX(0.9116);">Código</div>
<div class="t" style="left:1694.00px;top:447px;font-size:13.95px;line-height:13.95px;color:#1f1f1f;transform:scaleX(0.9271);">Descrição</div>
<div class="a" style="left:1222.90px;top:464.00px;width:12.80px;height:201.80px;background:#efefef;"></div>
<div class="a" style="left:1236.70px;top:464.00px;width:36.90px;height:21.50px;background:#ececec;"></div>
<div class="a" style="left:1222.90px;top:485.00px;width:768.30px;height:1.40px;background:#a9a9a9;"></div>
<div class="a" style="left:1222.90px;top:507.50px;width:768.30px;height:1.40px;background:#a9a9a9;"></div>
<div class="a" style="left:1222.90px;top:530.00px;width:768.30px;height:1.40px;background:#a9a9a9;"></div>
<div class="a" style="left:1222.90px;top:552.50px;width:768.30px;height:1.40px;background:#a9a9a9;"></div>
<div class="a" style="left:1222.90px;top:575.00px;width:768.30px;height:1.40px;background:#a9a9a9;"></div>
<div class="a" style="left:1222.90px;top:597.50px;width:768.30px;height:1.40px;background:#a9a9a9;"></div>
<div class="a" style="left:1222.90px;top:620.00px;width:768.30px;height:1.40px;background:#a9a9a9;"></div>
<div class="a" style="left:1222.90px;top:642.50px;width:768.30px;height:1.40px;background:#a9a9a9;"></div>
<div class="a" style="left:1222.90px;top:665.00px;width:768.30px;height:1.40px;background:#a9a9a9;"></div>
<div class="a" style="left:1235.70px;top:464.00px;width:1.40px;height:202.20px;background:#a9a9a9;"></div>
<div class="a" style="left:1273.60px;top:464.00px;width:1.40px;height:202.20px;background:#a9a9a9;"></div>
<div class="a" style="left:1454.30px;top:464.00px;width:1.40px;height:202.20px;background:#a9a9a9;"></div>
<div class="a" style="left:1989.90px;top:464.00px;width:1.40px;height:202.20px;background:#a9a9a9;"></div>
<div class="a" style="left:1312.70px;top:416.30px;width:2.70px;height:249.90px;background:#0a0a0a;"></div>
<svg class="a" style="left:1226.00px;top:468.00px;" width="10" height="14" viewBox="0 0 10 14"><path d="M1.5 1 L8 6 L1.5 11 Z" fill="#0a0a0a"/></svg>
<div class="a" style="left:1247.6px;top:466.3px;width:16px;height:16px;box-sizing:border-box;border:1.4px solid #7a7a7a;border-radius:3.5px;background:#f3f3f3;"></div>
<div class="t" style="left:1317.50px;top:468px;font-size:14.24px;line-height:14.24px;color:#1f1f1f;transform:scaleX(0.8286);">AM</div>
<div class="t" style="left:1457.50px;top:468px;font-size:14.24px;line-height:14.24px;color:#1f1f1f;transform:scaleX(0.8818);">AMOSTRA GRATIS</div>
<div class="a" style="left:1247.6px;top:488.8px;width:16px;height:16px;box-sizing:border-box;border:1.4px solid #7a7a7a;border-radius:3.5px;background:#f3f3f3;"></div>
<div class="t" style="left:1317.50px;top:490px;font-size:14.24px;line-height:14.24px;color:#1f1f1f;transform:scaleX(0.8117);">BO</div>
<div class="t" style="left:1457.50px;top:490px;font-size:14.24px;line-height:14.24px;color:#1f1f1f;transform:scaleX(0.9010);">BONIFICAÇÃO</div>
<div class="a" style="left:1247.6px;top:511.3px;width:16px;height:16px;box-sizing:border-box;border:1.4px solid #7a7a7a;border-radius:3.5px;background:#f3f3f3;"></div>
<div class="t" style="left:1317.50px;top:513px;font-size:14.24px;line-height:14.24px;color:#1f1f1f;transform:scaleX(0.8166);">FC</div>
<div class="t" style="left:1457.50px;top:513px;font-size:14.24px;line-height:14.24px;color:#1f1f1f;transform:scaleX(0.8756);">FECHAMENTO REQUISIÇÃO</div>
<div class="a" style="left:1247.6px;top:533.8px;width:16px;height:16px;box-sizing:border-box;border:1.4px solid #7a7a7a;border-radius:3.5px;background:#f3f3f3;"></div>
<div class="t" style="left:1317.50px;top:535px;font-size:14.24px;line-height:14.24px;color:#1f1f1f;transform:scaleX(0.8237);">FCF</div>
<div class="t" style="left:1457.50px;top:535px;font-size:14.24px;line-height:14.24px;color:#1f1f1f;transform:scaleX(0.8700);">FECHAMENTO FATURAMENTO</div>
<div class="a" style="left:1247.6px;top:556.3px;width:16px;height:16px;box-sizing:border-box;border:1.6px solid #1a1a1a;border-radius:1px;background:#f0f0f0;"></div>
<div class="t" style="left:1317.50px;top:558px;font-size:14.24px;line-height:14.24px;color:#1f1f1f;transform:scaleX(0.7633);">PV</div>
<div class="t" style="left:1457.50px;top:558px;font-size:14.24px;line-height:14.24px;color:#1f1f1f;transform:scaleX(0.8738);">VENDA FATURAMENTO</div>
<div class="a" style="left:1247.6px;top:578.8px;width:16px;height:16px;box-sizing:border-box;border:1.4px solid #7a7a7a;border-radius:3.5px;background:#f3f3f3;"></div>
<div class="t" style="left:1317.50px;top:580px;font-size:14.24px;line-height:14.24px;color:#1f1f1f;transform:scaleX(0.8521);">RQ</div>
<div class="t" style="left:1457.50px;top:580px;font-size:14.24px;line-height:14.24px;color:#1f1f1f;transform:scaleX(0.8914);">REQUISICAO</div>
<div class="a" style="left:1247.6px;top:601.3px;width:16px;height:16px;box-sizing:border-box;border:1.4px solid #7a7a7a;border-radius:3.5px;background:#f3f3f3;"></div>
<div class="t" style="left:1317.50px;top:603px;font-size:14.24px;line-height:14.24px;color:#1f1f1f;transform:scaleX(0.8278);">RT</div>
<div class="t" style="left:1457.50px;top:603px;font-size:14.24px;line-height:14.24px;color:#1f1f1f;transform:scaleX(0.8498);">REMESSA DE ENTREGA FUTURA</div>
<div class="a" style="left:1247.6px;top:623.8px;width:16px;height:16px;box-sizing:border-box;border:1.4px solid #7a7a7a;border-radius:3.5px;background:#f3f3f3;"></div>
<div class="t" style="left:1317.50px;top:625px;font-size:14.24px;line-height:14.24px;color:#1f1f1f;transform:scaleX(0.8047);">TF</div>
<div class="t" style="left:1457.50px;top:625px;font-size:14.24px;line-height:14.24px;color:#1f1f1f;transform:scaleX(0.8771);">TRANSFERENCIA ENTRE FILIAIS</div>
<div class="a" style="left:1247.6px;top:646.3px;width:16px;height:16px;box-sizing:border-box;border:1.4px solid #7a7a7a;border-radius:3.5px;background:#f3f3f3;"></div>
<div class="t" style="left:1317.50px;top:648px;font-size:14.24px;line-height:14.24px;color:#1f1f1f;transform:scaleX(0.7694);">VT</div>
<div class="t" style="left:1457.50px;top:648px;font-size:14.24px;line-height:14.24px;color:#1f1f1f;transform:scaleX(0.8541);">VENDA DE ENTREGA FUTURA</div>
<div class="a" style="left:1222.90px;top:1201.00px;width:1155.70px;height:23.30px;background:#f0f0f0;"></div>
<div class="a" style="left:1224.7px;top:1202.3px;width:18.3px;height:20px;box-sizing:border-box;border:1px solid #e6e6e6;border-radius:4px;background:#f5f5f5;"></div>
<svg class="a" style="left:1224.70px;top:1202.30px;" width="18" height="19" viewBox="0 0 18 19"><rect x="3" y="5.5" width="1.5" height="8" fill="#b4b4b4"/><path d="M4.5 9.5 L9 5.5 V13.5 Z M9 9.5 L13.5 5.5 V13.5 Z" fill="#b4b4b4"/></svg>
<div class="a" style="left:1247.5px;top:1202.3px;width:18.3px;height:20px;box-sizing:border-box;border:1px solid #e6e6e6;border-radius:4px;background:#f5f5f5;"></div>
<svg class="a" style="left:1247.50px;top:1202.30px;" width="18" height="19" viewBox="0 0 18 19"><path d="M6 9.5 L11 5.5 V13.5 Z" fill="#b4b4b4"/></svg>
<div class="a" style="left:1267.80px;top:1201.00px;width:52.30px;height:23.30px;background:#ffffff;"></div>
<div class="t" style="left:1275.80px;top:1207px;font-size:13.37px;line-height:13.37px;color:#111;transform:scaleX(0.9765);">1 de 9</div>
<div class="a" style="left:1322.6px;top:1202.3px;width:18.3px;height:20px;box-sizing:border-box;border:1px solid #d6d6d6;border-radius:4px;background:#fefefe;box-shadow:0 1px 0 #dedede;"></div>
<svg class="a" style="left:1322.60px;top:1202.30px;" width="18" height="19" viewBox="0 0 18 19"><path d="M12.5 9.5 L7.5 5.5 V13.5 Z" fill="#333"/></svg>
<div class="a" style="left:1344.7px;top:1202.3px;width:18.3px;height:20px;box-sizing:border-box;border:1px solid #d6d6d6;border-radius:4px;background:#fefefe;box-shadow:0 1px 0 #dedede;"></div>
<svg class="a" style="left:1344.70px;top:1202.30px;" width="18" height="19" viewBox="0 0 18 19"><path d="M9 9.5 L4.5 5.5 V13.5 Z M13.5 9.5 L9 5.5 V13.5 Z" fill="#333"/><rect x="13.5" y="5.5" width="1.5" height="8" fill="#333"/></svg>
<div class="a" style="left:1367.5px;top:1202.3px;width:18.3px;height:20px;box-sizing:border-box;border:1px solid #d6d6d6;border-radius:4px;background:#fefefe;box-shadow:0 1px 0 #dedede;"></div>
<svg class="a" style="left:1367.50px;top:1202.30px;" width="18" height="19" viewBox="0 0 18 19"><path d="M4.6 4.6 Q9 9 13.6 14.8" fill="none" stroke="#2f8a34" stroke-width="2.6"/><path d="M13.8 4.4 Q9 9.5 4.2 14.8" fill="none" stroke="#1e6a24" stroke-width="2.4"/></svg>
<div class="a" style="left:1389.7px;top:1202.3px;width:18.3px;height:20px;box-sizing:border-box;border:1px solid #d6d6d6;border-radius:4px;background:#fefefe;box-shadow:0 1px 0 #dedede;"></div>
<svg class="a" style="left:1389.70px;top:1202.30px;" width="18" height="19" viewBox="0 0 18 19"><rect x="3" y="3.5" width="7" height="2" fill="#4a7ab8"/><rect x="4" y="5" width="1.5" height="10" fill="#999"/><rect x="7" y="6" width="8" height="2.6" fill="#4a7ab8"/><rect x="7" y="9.6" width="8" height="2.6" fill="#4a7ab8"/><rect x="7" y="13.2" width="8" height="2.6" fill="#4a7ab8"/></svg>
<div class="a" style="left:1412.5px;top:1202.3px;width:18.3px;height:20px;box-sizing:border-box;border:1px solid #d6d6d6;border-radius:4px;background:#fefefe;box-shadow:0 1px 0 #dedede;"></div>
<svg class="a" style="left:1412.50px;top:1202.30px;" width="18" height="19" viewBox="0 0 18 19"><rect x="3" y="4" width="12.3" height="12" fill="#7e4fb0"/><rect x="5.6" y="5.6" width="7" height="3.7" fill="#fbf4ff"/><path d="M5.6 14.2 V12.4 H12.6 V14.2 H10.2 Q9.1 12.8 8 14.2 Z" fill="#f3dcff"/></svg>
<div class="a" style="left:1435.2px;top:1202.3px;width:18.3px;height:20px;box-sizing:border-box;border:1px solid #d6d6d6;border-radius:4px;background:#fefefe;box-shadow:0 1px 0 #dedede;"></div>
<svg class="a" style="left:1435.20px;top:1202.30px;" width="18" height="19" viewBox="0 0 18 19"><path d="M2.5 6 H7 L8 5 H13 V14.5 H2.5 Z" fill="#e6c07a"/><path d="M2.5 14.5 L5 9 H15.5 L13 14.5 Z" fill="#f0d49a"/><path d="M11 10 L14.5 12 L11 14" fill="none" stroke="#4a7ab8" stroke-width="1.3"/></svg>
<div class="a" style="left:1457.4px;top:1202.3px;width:18.3px;height:20px;box-sizing:border-box;border:1px solid #d6d6d6;border-radius:4px;background:#fefefe;box-shadow:0 1px 0 #dedede;"></div>
<svg class="a" style="left:1457.40px;top:1202.30px;" width="18" height="19" viewBox="0 0 18 19"><path d="M5.5 6.5 A5 5 0 1 1 5.2 12.5" fill="none" stroke="#3f6fb0" stroke-width="2.3"/><path d="M3 3.5 L3 9 L8.5 9 Z" fill="#3f6fb0"/></svg>
<svg class="a" style="left:1545.00px;top:1206.00px;" width="12" height="14" viewBox="0 0 12 14"><path d="M2 7 L9.5 2 V12 Z" fill="#a8a8a8"/></svg>
<svg class="a" style="left:2363.70px;top:1206.00px;" width="12" height="14" viewBox="0 0 12 14"><path d="M10 7 L2.5 2 V12 Z" fill="#a8a8a8"/></svg>
<div class="a" style="left:0.00px;top:1243.20px;width:2396.00px;height:1.00px;background:#d9d9d9;"></div>
<div class="a" style="left:0.00px;top:1266.80px;width:2396.00px;height:1.00px;background:#d9d9d9;"></div>
<div class="a" style="left:244.50px;top:1245.40px;width:1.00px;height:40.60px;background:#d9d9d9;"></div>
<div class="a" style="left:683.30px;top:1267.50px;width:1.00px;height:18.50px;background:#d9d9d9;"></div>
<div class="a" style="left:1121.30px;top:1267.50px;width:1.00px;height:18.50px;background:#d9d9d9;"></div>
<div class="a" style="left:1309.00px;top:1267.50px;width:1.00px;height:18.50px;background:#d9d9d9;"></div>
<div class="a" style="left:1459.40px;top:1267.50px;width:1.00px;height:18.50px;background:#d9d9d9;"></div>
<div class="t" style="left:0.00px;top:1250px;font-size:14.53px;line-height:14.53px;color:#1f1f1f;transform:scaleX(0.9914);">Rotina: Alteração</div>
<div class="t" style="left:0.00px;top:1273px;font-size:14.53px;line-height:14.53px;color:#1f1f1f;transform:scaleX(0.9469);">Usuário: UNICODE</div>
<div class="t" style="left:251.10px;top:1273px;font-size:14.53px;line-height:14.53px;color:#1f1f1f;transform:scaleX(0.9669);">Banco de Dados: DB LIMPO / Versão: 2023.12.00</div>
<div class="t" style="left:689.00px;top:1273px;font-size:14.53px;line-height:14.53px;color:#1f1f1f;transform:scaleX(0.9353);">001 - UNICODE SOFTWARE</div>
<div class="t" style="left:1127.50px;top:1273px;font-size:14.53px;line-height:14.53px;color:#1f1f1f;transform:scaleX(0.9161);">BD: 1763</div>
<div class="t" style="left:1465.80px;top:1273px;font-size:14.53px;line-height:14.53px;color:#1f1f1f;transform:scaleX(0.9959);white-space:pre;">Conectado - 15sec  -  Plano Empresarial</div>
</body></html>
